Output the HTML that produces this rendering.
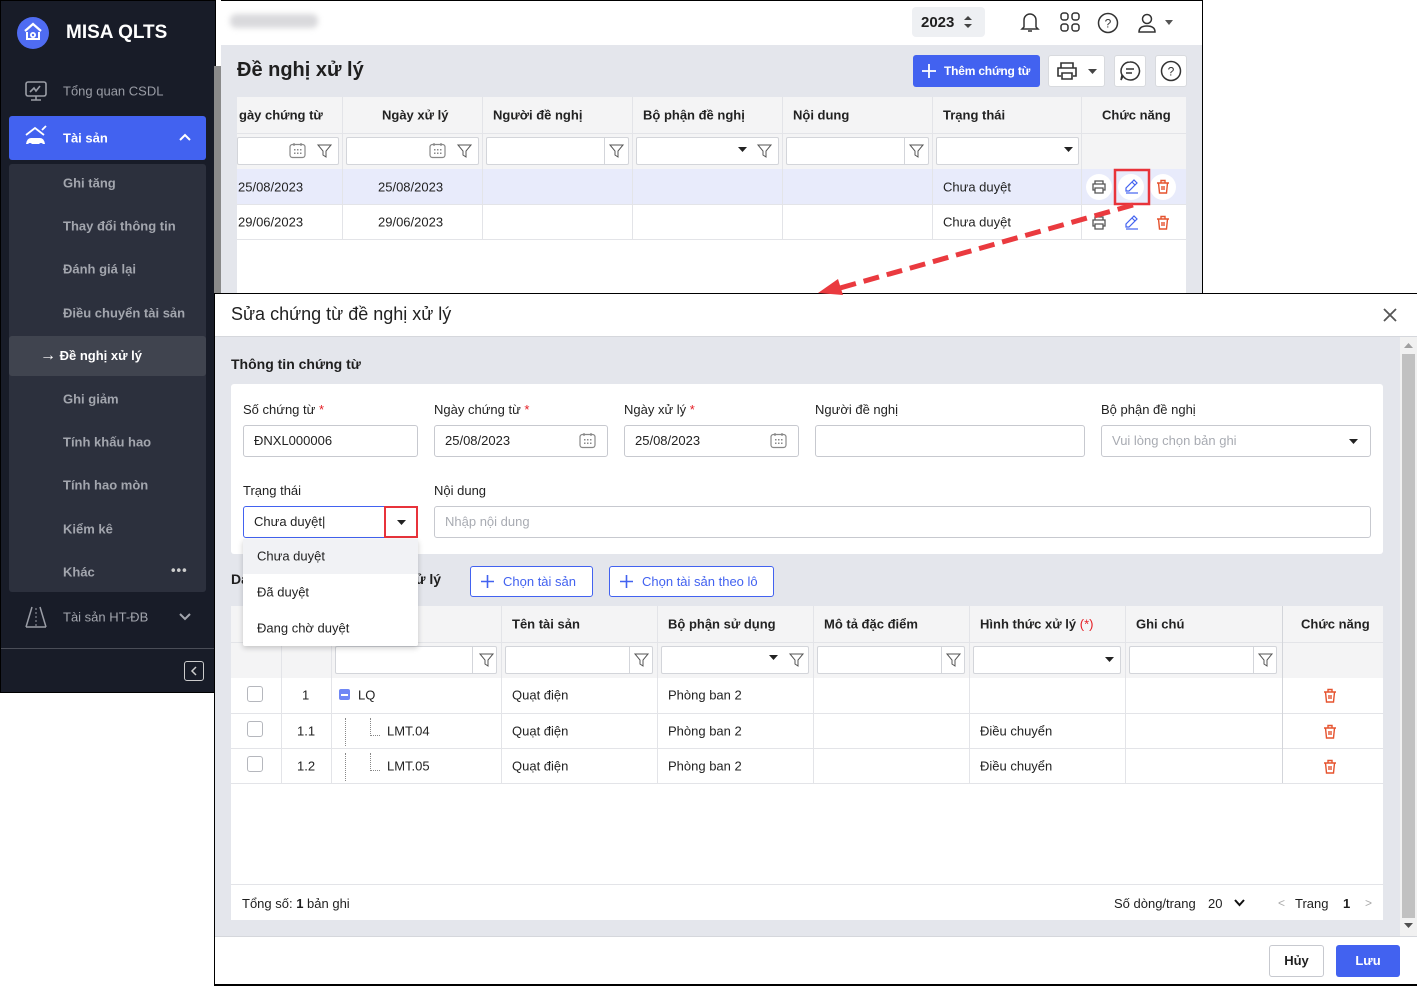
<!DOCTYPE html>
<html><head><meta charset="utf-8">
<style>
*{box-sizing:border-box;margin:0;padding:0}
body{width:1417px;height:986px;position:relative;overflow:hidden;background:#fff;font-family:"Liberation Sans",Arial,sans-serif;font-size:13px;color:#1f1f1f}
.a{position:absolute}
.sb{left:0;top:0;width:216px;height:693px;background:#181c28;border:1px solid #000}
.mi{position:absolute;left:63px;color:#a3a6ae;font-size:13px;font-weight:bold;transform:translateY(-50%)}
.inp{position:absolute;background:#fff;border:1px solid #c7c9cf;border-radius:3px;height:32px;font-size:13px;line-height:30px;padding-left:10px;color:#222}
.lbl{position:absolute;font-size:13px;color:#222}
.req{color:#e51c23}
.th{position:absolute;font-weight:bold;font-size:13px;color:#222;transform:translateY(-50%)}
.td{position:absolute;font-size:13px;color:#222;transform:translateY(-50%)}
.fin{position:absolute;background:#fff;border:1px solid #d3d5da;border-radius:2px;height:28px}
.vl{position:absolute;width:1px;background:#e3e4e8}
.hl{position:absolute;height:1px;background:#e3e4e8}
.btnb{position:absolute;border:1px solid #4262f0;border-radius:3px;background:#fff;color:#4262f0;font-size:13px;line-height:29px;padding-left:32px}
</style></head><body>

<!-- SIDEBAR -->
<div class="a sb"></div>
<div class="a" style="left:17px;top:17px;width:32px;height:32px;border-radius:50%;background:#4f6cf2"></div>
<svg class="a" style="left:22px;top:21px" width="22" height="22" viewBox="0 0 22 22"><path d="M3 10 L11 3 L19 10" stroke="#fff" stroke-width="2.2" fill="none"/><path d="M5 11 v7 h12 v-7" stroke="#fff" stroke-width="2" fill="none"/><circle cx="11" cy="14" r="3" fill="#fff"/><circle cx="11" cy="14" r="1.2" fill="#4f6cf2"/></svg>
<div class="a" style="left:66px;top:22px;color:#fff;font-weight:bold;font-size:19px">MISA QLTS</div>
<div class="a" style="left:214px;top:66px;width:7px;height:227px;background:#8a8a8a"></div>
<svg class="a" style="left:24px;top:79px" width="24" height="24" viewBox="0 0 24 24"><rect x="2" y="3" width="20" height="14" rx="2" stroke="#9a9da6" stroke-width="1.6" fill="none"/><path d="M6 13 l4-4 2 3 4-5" stroke="#9a9da6" stroke-width="1.6" fill="none"/><path d="M12 17 v4 M7 21 h10" stroke="#9a9da6" stroke-width="1.6"/></svg>
<div class="mi" style="top:91px;font-weight:normal;color:#9a9da6">Tổng quan CSDL</div>
<div class="a" style="left:9px;top:116px;width:197px;height:44px;background:#4262f0;border-radius:3px"></div>
<svg class="a" style="left:23px;top:124px" width="26" height="26" viewBox="0 0 26 26"><path d="M3 11 L12 4 L21 11 M19 6 l4 -4" stroke="#fff" stroke-width="1.8" fill="none"/><path d="M3 20 q1-6 5-6 h9 q4 0 5 6 z" fill="#fff"/><circle cx="7" cy="21" r="2" fill="#4262f0"/><circle cx="18" cy="21" r="2" fill="#4262f0"/></svg>
<div class="mi" style="top:138px;color:#fff">Tài sản</div>
<svg class="a" style="left:179px;top:132px" width="12" height="10"><path d="M1 8 L6 3 L11 8" stroke="#fff" stroke-width="2" fill="none"/></svg>
<div class="a" style="left:9px;top:164px;width:197px;height:428px;background:#2c303d;border-radius:3px"></div>
<div class="a" style="left:9px;top:336px;width:197px;height:40px;background:#40444f;border-radius:3px"></div>
<div class="mi" style="top:183px">Ghi tăng</div>
<div class="mi" style="top:226px">Thay đổi thông tin</div>
<div class="mi" style="top:269px">Đánh giá lại</div>
<div class="mi" style="top:313px">Điều chuyển tài sản</div>
<div class="mi" style="top:356px;color:#fff;left:40px"><span style="font-size:16px;font-weight:normal">→</span> Đề nghị xử lý</div>
<div class="mi" style="top:399px">Ghi giảm</div>
<div class="mi" style="top:442px">Tính khấu hao</div>
<div class="mi" style="top:485px">Tính hao mòn</div>
<div class="mi" style="top:529px">Kiểm kê</div>
<div class="mi" style="top:572px">Khác</div>
<div class="mi" style="top:570px;left:171px;color:#ccc;letter-spacing:1px">•••</div>
<svg class="a" style="left:24px;top:605px" width="24" height="24" viewBox="0 0 24 24"><path d="M8 2 L2 22 M16 2 L22 22" stroke="#9a9da6" stroke-width="1.5" fill="none"/><path d="M12 3 v18" stroke="#9a9da6" stroke-width="1" stroke-dasharray="2 2"/><path d="M2 22 h20" stroke="#9a9da6" stroke-width="1.5"/></svg>
<div class="mi" style="top:617px;font-weight:normal;color:#a3a6ae">Tài sản HT-ĐB</div>
<svg class="a" style="left:179px;top:612px" width="12" height="10"><path d="M1 2 L6 7 L11 2" stroke="#a3a6ae" stroke-width="2" fill="none"/></svg>
<div class="a" style="left:1px;top:648px;width:214px;height:1px;background:#4a4d57"></div>
<div class="a" style="left:184px;top:661px;width:20px;height:20px;border:1.5px solid #ccc;border-radius:3px"></div>
<svg class="a" style="left:189px;top:666px" width="10" height="10"><path d="M7 1 L3 5 L7 9" stroke="#ccc" stroke-width="1.5" fill="none"/></svg>

<!-- MAIN BG -->
<div class="a" style="left:221px;top:0;width:982px;height:294px;background:#e4e6ec;border-right:1px solid #000;border-top:1px solid #000"></div>
<div class="a" style="left:221px;top:1px;width:981px;height:44px;background:#fff"></div>
<div class="a" style="left:230px;top:14px;width:88px;height:14px;background:#d9d9dc;border-radius:6px;filter:blur(3px)"></div>
<div class="a" style="left:912px;top:7px;width:73px;height:30px;background:#eef0f3;border-radius:4px"></div>
<div class="a" style="left:921px;top:14px;font-weight:bold;font-size:15px">2023</div>
<svg class="a" style="left:963px;top:15px" width="10" height="14"><path d="M1 5 L5 1 L9 5 Z M1 9 L5 13 L9 9 Z" fill="#444"/></svg>
<svg class="a" style="left:1019px;top:11px" width="22" height="22" viewBox="0 0 22 22"><path d="M5 16 V9 a6 6 0 0 1 12 0 v7 l2 2 H3 z M9 20 h4" stroke="#333" stroke-width="1.5" fill="none"/></svg>
<svg class="a" style="left:1060px;top:12px" width="20" height="20" viewBox="0 0 20 20"><g stroke="#333" stroke-width="1.5" fill="none"><rect x="1" y="1" width="7" height="7" rx="2.5"/><rect x="12" y="1" width="7" height="7" rx="2.5"/><rect x="1" y="12" width="7" height="7" rx="2.5"/><rect x="12" y="12" width="7" height="7" rx="2.5"/></g></svg>
<svg class="a" style="left:1097px;top:12px" width="22" height="22" viewBox="0 0 22 22"><circle cx="11" cy="11" r="9.5" stroke="#333" stroke-width="1.5" fill="none"/><text x="11" y="15.5" font-size="12" text-anchor="middle" fill="#333" font-family="Liberation Sans">?</text></svg>
<svg class="a" style="left:1136px;top:12px" width="22" height="22" viewBox="0 0 22 22"><circle cx="11" cy="7" r="4.5" stroke="#333" stroke-width="1.5" fill="none"/><path d="M3 20 q0-6 8-6 q8 0 8 6 z" stroke="#333" stroke-width="1.5" fill="none"/></svg>
<svg class="a" style="left:1165px;top:20px" width="8" height="5"><path d="M0 0 L8 0 L4 5 Z" fill="#555"/></svg>
<div class="a" style="left:237px;top:59px;font-weight:bold;font-size:20px">Đề nghị xử lý</div>
<div class="a" style="left:913px;top:55px;width:127px;height:32px;background:#4262f0;border-radius:3px;color:#fff;font-weight:bold;font-size:12px;line-height:32px;padding-left:31px;white-space:nowrap;letter-spacing:-0.2px">Thêm chứng từ</div>
<svg class="a" style="left:921px;top:63px" width="16" height="16"><path d="M8 1 v14 M1 8 h14" stroke="#fff" stroke-width="1.8"/></svg>
<div class="a" style="left:1048px;top:55px;width:57px;height:32px;background:#fff;border:1px solid #d8dade;border-radius:3px"></div>
<svg class="a" style="left:1056px;top:61px" width="22" height="20" viewBox="0 0 22 20"><path d="M5 7 V2 h12 v5 M5 15 H2 V7 h18 v8 h-3 M6 12 h10 v6 H6 z" stroke="#333" stroke-width="1.6" fill="none"/></svg>
<svg class="a" style="left:1088px;top:69px" width="9" height="5"><path d="M0 0 H9 L4.5 5 Z" fill="#444"/></svg>
<div class="a" style="left:1114px;top:55px;width:32px;height:32px;background:#fff;border:1px solid #d8dade;border-radius:3px"></div>
<svg class="a" style="left:1119px;top:60px" width="22" height="22" viewBox="0 0 22 22"><path d="M11 2 a9 9 0 1 1 -7 14 l-2 4 1-5 A9 9 0 0 1 11 2z" stroke="#333" stroke-width="1.5" fill="none"/><path d="M7 9 h8 M7 13 h6" stroke="#333" stroke-width="1.5"/></svg>
<div class="a" style="left:1155px;top:55px;width:32px;height:32px;background:#fff;border:1px solid #d8dade;border-radius:3px"></div>
<svg class="a" style="left:1160px;top:60px" width="22" height="22" viewBox="0 0 22 22"><circle cx="11" cy="11" r="9.5" stroke="#333" stroke-width="1.5" fill="none"/><text x="11" y="15.5" font-size="12" text-anchor="middle" fill="#333" font-family="Liberation Sans">?</text></svg>

<!-- top table -->
<div class="a" style="left:237px;top:97px;width:949px;height:197px;background:#fff"></div>
<div class="a" style="left:237px;top:97px;width:949px;height:72px;background:#f4f4f5"></div>
<div class="a" style="left:237px;top:169px;width:949px;height:35px;background:#e8ebfb"></div>
<div class="hl" style="left:237px;top:133px;width:949px"></div>
<div class="hl" style="left:237px;top:204px;width:949px"></div>
<div class="hl" style="left:237px;top:239px;width:949px"></div>
<div class="vl" style="left:342px;top:97px;height:142px"></div>
<div class="vl" style="left:482px;top:97px;height:142px"></div>
<div class="vl" style="left:632px;top:97px;height:142px"></div>
<div class="vl" style="left:782px;top:97px;height:142px"></div>
<div class="vl" style="left:932px;top:97px;height:142px"></div>
<div class="vl" style="left:1081px;top:97px;height:142px"></div>
<div class="th" style="left:239px;top:115px">gày chứng từ</div>
<div class="th" style="left:382px;top:115px">Ngày xử lý</div>
<div class="th" style="left:493px;top:115px">Người đề nghị</div>
<div class="th" style="left:643px;top:115px">Bộ phận đề nghị</div>
<div class="th" style="left:793px;top:115px">Nội dung</div>
<div class="th" style="left:943px;top:115px">Trạng thái</div>
<div class="th" style="left:1102px;top:115px">Chức năng</div>
<div class="fin" style="left:237px;top:137px;width:102px"></div>
<div class="fin" style="left:346px;top:137px;width:133px"></div>
<div class="fin" style="left:486px;top:137px;width:143px"></div>
<div class="fin" style="left:636px;top:137px;width:143px"></div>
<div class="fin" style="left:786px;top:137px;width:143px"></div>
<div class="fin" style="left:936px;top:137px;width:143px"></div>
<div class="vl" style="left:604px;top:137px;height:28px;background:#d3d5da"></div>
<div class="vl" style="left:904px;top:137px;height:28px;background:#d3d5da"></div>
<div class="td" style="left:238px;top:187px">25/08/2023</div>
<div class="td" style="left:378px;top:187px">25/08/2023</div>
<div class="td" style="left:943px;top:187px">Chưa duyệt</div>
<div class="td" style="left:238px;top:222px">29/06/2023</div>
<div class="td" style="left:378px;top:222px">29/06/2023</div>
<div class="td" style="left:943px;top:222px">Chưa duyệt</div>
<div class="a" style="left:1086px;top:174px;width:26px;height:26px;border-radius:50%;background:#fff"></div>
<div class="a" style="left:1118px;top:174px;width:26px;height:26px;border-radius:50%;background:#fff"></div>
<div class="a" style="left:1150px;top:174px;width:26px;height:26px;border-radius:50%;background:#fff"></div>

<!-- DIALOG -->
<div class="a" style="left:214px;top:293px;width:1203px;height:693px;background:#e4e6ec;border:1px solid #000;border-right:none"></div>
<div class="a" style="left:215px;top:294px;width:1202px;height:43px;background:#fff;border-bottom:1px solid #d5d7dc"></div>
<div class="a" style="left:231px;top:304px;font-size:18px;color:#222">Sửa chứng từ đề nghị xử lý</div>
<svg class="a" style="left:1383px;top:308px" width="14" height="14"><path d="M1 1 L13 13 M13 1 L1 13" stroke="#555" stroke-width="1.8"/></svg>
<div class="a" style="left:1400px;top:337px;width:17px;height:599px;background:#f1f1f1"></div>
<div class="a" style="left:1402px;top:354px;width:13px;height:564px;background:#c1c1c1"></div>
<svg class="a" style="left:1404px;top:343px" width="9" height="6"><path d="M0 5 L4.5 0 L9 5 Z" fill="#a0a0a0"/></svg>
<svg class="a" style="left:1404px;top:923px" width="9" height="6"><path d="M0 0 L4.5 5 L9 0 Z" fill="#505050"/></svg>
<div class="a" style="left:231px;top:356px;font-weight:bold;font-size:14px">Thông tin chứng từ</div>
<div class="a" style="left:231px;top:384px;width:1152px;height:170px;background:#fff;border-radius:3px"></div>
<div class="lbl" style="left:243px;top:402px">Số chứng từ <span class="req">*</span></div>
<div class="lbl" style="left:434px;top:402px">Ngày chứng từ <span class="req">*</span></div>
<div class="lbl" style="left:624px;top:402px">Ngày xử lý <span class="req">*</span></div>
<div class="lbl" style="left:815px;top:402px">Người đề nghị</div>
<div class="lbl" style="left:1101px;top:402px">Bộ phận đề nghị</div>
<div class="inp" style="left:243px;top:425px;width:175px">ĐNXL000006</div>
<div class="inp" style="left:434px;top:425px;width:174px">25/08/2023</div>
<div class="inp" style="left:624px;top:425px;width:175px">25/08/2023</div>
<div class="inp" style="left:815px;top:425px;width:270px"></div>
<div class="inp" style="left:1101px;top:425px;width:270px;color:#a8abb2">Vui lòng chọn bản ghi</div>
<svg class="a" style="left:1349px;top:439px" width="9" height="5"><path d="M0 0 H9 L4.5 5 Z" fill="#222"/></svg>
<div class="lbl" style="left:243px;top:483px">Trạng thái</div>
<div class="lbl" style="left:434px;top:483px">Nội dung</div>
<div class="inp" style="left:243px;top:506px;width:175px;border-color:#4262f0">Chưa duyệt|</div>
<div class="inp" style="left:434px;top:506px;width:937px;color:#a8abb2">Nhập nội dung</div>
<div class="a" style="left:384px;top:506px;width:34px;height:32px;border:2px solid #e8333b"></div>
<svg class="a" style="left:397px;top:520px" width="9" height="5"><path d="M0 0 H9 L4.5 5 Z" fill="#222"/></svg>

<div class="a" style="left:231px;top:571px;font-weight:bold;font-size:14px">Danh sách tài sản đề nghị xử lý</div>
<div class="btnb" style="left:470px;top:566px;width:123px;height:31px">Chọn tài sản</div>
<div class="btnb" style="left:609px;top:566px;width:165px;height:31px">Chọn tài sản theo lô</div>
<svg class="a" style="left:480px;top:574px" width="15" height="15"><path d="M7.5 1 v13 M1 7.5 h13" stroke="#4262f0" stroke-width="1.6"/></svg>
<svg class="a" style="left:619px;top:574px" width="15" height="15"><path d="M7.5 1 v13 M1 7.5 h13" stroke="#4262f0" stroke-width="1.6"/></svg>

<!-- bottom table -->
<div class="a" style="left:231px;top:606px;width:1152px;height:314px;background:#fff"></div>
<div class="a" style="left:231px;top:606px;width:1152px;height:72px;background:#f4f4f5"></div>
<div class="hl" style="left:231px;top:642px;width:1152px"></div>
<div class="hl" style="left:231px;top:713px;width:1152px"></div>
<div class="hl" style="left:231px;top:748px;width:1152px"></div>
<div class="hl" style="left:231px;top:783px;width:1152px"></div>
<div class="hl" style="left:231px;top:884px;width:1152px"></div>
<div class="vl" style="left:281px;top:606px;height:177px"></div>
<div class="vl" style="left:331px;top:606px;height:177px"></div>
<div class="vl" style="left:501px;top:606px;height:177px"></div>
<div class="vl" style="left:657px;top:606px;height:177px"></div>
<div class="vl" style="left:813px;top:606px;height:177px"></div>
<div class="vl" style="left:969px;top:606px;height:177px"></div>
<div class="vl" style="left:1125px;top:606px;height:177px"></div>
<div class="vl" style="left:1282px;top:606px;height:177px;background:#d3d5da"></div>
<div class="th" style="left:512px;top:624px">Tên tài sản</div>
<div class="th" style="left:668px;top:624px">Bộ phận sử dụng</div>
<div class="th" style="left:824px;top:624px">Mô tả đặc điểm</div>
<div class="th" style="left:980px;top:624px">Hình thức xử lý <span class="req" style="font-weight:normal">(*)</span></div>
<div class="th" style="left:1136px;top:624px">Ghi chú</div>
<div class="th" style="left:1301px;top:624px">Chức năng</div>
<div class="fin" style="left:335px;top:646px;width:162px"></div>
<div class="fin" style="left:505px;top:646px;width:148px"></div>
<div class="fin" style="left:661px;top:646px;width:148px"></div>
<div class="fin" style="left:817px;top:646px;width:148px"></div>
<div class="fin" style="left:973px;top:646px;width:148px"></div>
<div class="fin" style="left:1129px;top:646px;width:148px"></div>
<div class="vl" style="left:472px;top:646px;height:28px;background:#d3d5da"></div>
<div class="vl" style="left:629px;top:646px;height:28px;background:#d3d5da"></div>
<div class="vl" style="left:941px;top:646px;height:28px;background:#d3d5da"></div>
<div class="vl" style="left:1253px;top:646px;height:28px;background:#d3d5da"></div>
<svg class="a" style="left:769px;top:655px" width="9" height="5"><path d="M0 0 H9 L4.5 5 Z" fill="#222"/></svg>
<svg class="a" style="left:1105px;top:657px" width="9" height="5"><path d="M0 0 H9 L4.5 5 Z" fill="#222"/></svg>
<svg class="a" style="left:738px;top:147px" width="9" height="5"><path d="M0 0 H9 L4.5 5 Z" fill="#222"/></svg>
<svg class="a" style="left:1064px;top:147px" width="9" height="5"><path d="M0 0 H9 L4.5 5 Z" fill="#222"/></svg>

<div class="a" style="left:247px;top:686px;width:16px;height:16px;border:1px solid #b5b7bd;border-radius:3px"></div>
<div class="a" style="left:247px;top:721px;width:16px;height:16px;border:1px solid #b5b7bd;border-radius:3px"></div>
<div class="a" style="left:247px;top:756px;width:16px;height:16px;border:1px solid #b5b7bd;border-radius:3px"></div>
<div class="td" style="left:302px;top:695px">1</div>
<div class="td" style="left:297px;top:731px">1.1</div>
<div class="td" style="left:297px;top:766px">1.2</div>
<div class="a" style="left:339px;top:689px;width:11px;height:11px;background:#6f87f5;border-radius:2px"></div>
<div class="a" style="left:341px;top:694px;width:7px;height:1.5px;background:#fff"></div>
<div class="td" style="left:358px;top:695px">LQ</div>
<div class="a" style="left:345px;top:718px;height:28px;border-left:1px dotted #888"></div>
<div class="a" style="left:370px;top:718px;height:18px;border-left:1px dotted #888;border-bottom:1px dotted #888;width:10px"></div>
<div class="a" style="left:345px;top:753px;height:28px;border-left:1px dotted #888"></div>
<div class="a" style="left:370px;top:753px;height:18px;border-left:1px dotted #888;border-bottom:1px dotted #888;width:10px"></div>
<div class="td" style="left:387px;top:731px">LMT.04</div>
<div class="td" style="left:387px;top:766px">LMT.05</div>
<div class="td" style="left:512px;top:695px">Quạt điện</div>
<div class="td" style="left:512px;top:731px">Quạt điện</div>
<div class="td" style="left:512px;top:766px">Quạt điện</div>
<div class="td" style="left:668px;top:695px">Phòng ban 2</div>
<div class="td" style="left:668px;top:731px">Phòng ban 2</div>
<div class="td" style="left:668px;top:766px">Phòng ban 2</div>
<div class="td" style="left:980px;top:731px">Điều chuyển</div>
<div class="td" style="left:980px;top:766px">Điều chuyển</div>
<div class="a" style="left:242px;top:896px;font-size:13px">Tổng số: <b>1</b> bản ghi</div>
<div class="a" style="left:1114px;top:896px;font-size:13px">Số dòng/trang</div>
<div class="a" style="left:1208px;top:896px;font-size:13px">20</div>
<svg class="a" style="left:1234px;top:899px" width="11" height="8"><path d="M1 1 L5.5 6 L10 1" stroke="#111" stroke-width="2" fill="none"/></svg>
<div class="a" style="left:1278px;top:896px;font-size:12px;color:#aaa">&lt;</div>
<div class="a" style="left:1295px;top:896px;font-size:13px">Trang</div>
<div class="a" style="left:1343px;top:896px;font-size:13px;font-weight:bold">1</div>
<div class="a" style="left:1365px;top:896px;font-size:12px;color:#aaa">&gt;</div>

<!-- dialog footer -->
<div class="a" style="left:215px;top:936px;width:1202px;height:49px;background:#fff;border-top:1px solid #d5d7dc;border-bottom:1px solid #000"></div>
<div class="a" style="left:1269px;top:945px;width:55px;height:32px;border:1px solid #c7c9cf;border-radius:3px;background:#fff;text-align:center;line-height:30px;font-weight:bold">Hủy</div>
<div class="a" style="left:1336px;top:945px;width:64px;height:32px;border-radius:3px;background:#4262f0;color:#fff;text-align:center;line-height:32px;font-weight:bold">Lưu</div>

<!-- dropdown popup -->
<div class="a" style="left:243px;top:539px;width:175px;height:107px;background:#fff;box-shadow:0 2px 6px rgba(0,0,0,.2);border-radius:2px"></div>
<div class="a" style="left:243px;top:539px;width:175px;height:35px;background:#f1f2f5"></div>
<div class="td" style="left:257px;top:556px">Chưa duyệt</div>
<div class="td" style="left:257px;top:592px">Đã duyệt</div>
<div class="td" style="left:257px;top:628px">Đang chờ duyệt</div>

<!-- icons top table & overlays -->
<svg class="a" width="1417" height="986" style="left:0;top:0;pointer-events:none" viewBox="0 0 1417 986">
<defs>
<g id="flt"><path d="M0 0 H13 L8 6 V12 L5 10 V6 Z" stroke="#555" stroke-width="1" fill="none"/></g>
<g id="cal"><rect x="0" y="1.5" width="15" height="13" rx="2.5" stroke="#888" stroke-width="1.2" fill="none"/><path d="M4 0 v3 M11 0 v3" stroke="#888" stroke-width="1.2"/><g fill="#888"><rect x="4" y="6" width="1.5" height="1.5"/><rect x="7" y="6" width="1.5" height="1.5"/><rect x="10" y="6" width="1.5" height="1.5"/><rect x="4" y="9.5" width="1.5" height="1.5"/><rect x="7" y="9.5" width="1.5" height="1.5"/><rect x="10" y="9.5" width="1.5" height="1.5"/></g></g>
<g id="trash"><path d="M0 3 H12 M4 3 V0.5 H8 V3 M1.5 3 L2.5 13 H9.5 L10.5 3 M5 6 V10 M7 6 V10" stroke="#e5532f" stroke-width="1.4" fill="none"/></g>
<g id="pen"><path d="M1 12 V9 L9 1 L12 4 L4 12 Z M7 3 l3 3" stroke="#4262f0" stroke-width="1.2" fill="none"/><path d="M1 14 H13" stroke="#4262f0" stroke-width="1.2"/></g>
<g id="prn"><path d="M3 4 V1 H11 V4 M3 10 H1 V4 H13 V10 H11 M3 8 H11 V13 H3 Z" stroke="#555" stroke-width="1.3" fill="none"/></g>
</defs>
<use href="#cal" x="290" y="143"/><use href="#flt" x="318" y="145"/>
<use href="#cal" x="430" y="143"/><use href="#flt" x="458" y="145"/>
<use href="#flt" x="610" y="145"/><use href="#flt" x="758" y="145"/><use href="#flt" x="910" y="145"/>
<use href="#cal" x="580" y="433"/><use href="#cal" x="771" y="433"/>
<use href="#flt" x="480" y="654"/><use href="#flt" x="635" y="654"/><use href="#flt" x="790" y="654"/><use href="#flt" x="947" y="654"/><use href="#flt" x="1259" y="654"/>
<use href="#prn" x="1092" y="180"/><use href="#pen" x="1125" y="179"/><use href="#trash" x="1157" y="180"/>
<use href="#prn" x="1092" y="216"/><use href="#pen" x="1125" y="215"/><use href="#trash" x="1157" y="216"/>
<use href="#trash" x="1324" y="689"/><use href="#trash" x="1324" y="725"/><use href="#trash" x="1324" y="760"/>
<rect x="1115" y="170" width="34" height="34" stroke="#e8333b" stroke-width="2.5" fill="none"/>
<path d="M1133 205 L840 288" stroke="#ea3a3f" stroke-width="5" stroke-dasharray="16 8" fill="none"/>
<path d="M818 293 L838 279 L843 295 Z" fill="#ea3a3f"/>
</svg>
</body></html>
